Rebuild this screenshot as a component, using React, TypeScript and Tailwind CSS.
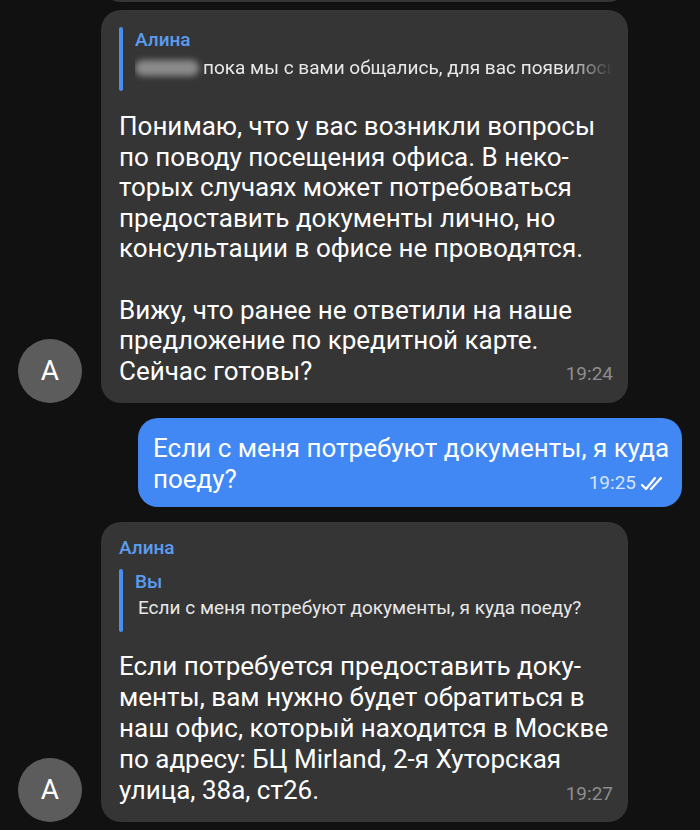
const font = { fontFamily: "Roboto, 'Noto Sans', sans-serif" };

function Avatar() {
  return (
    <div className="w-16 h-16 shrink-0 rounded-full bg-[#5c5c5c] flex items-center justify-center text-white text-[28px] ml-[18px]">
      A
    </div>
  );
}

function Time({ t }: { t: string }) {
  return <span className="text-[19px] text-[#8d8d8d] leading-none pb-[3px]">{t}</span>;
}

function DoubleCheck() {
  return (
    <svg width="26" height="16" viewBox="0 0 26 16" fill="none" stroke="white" strokeWidth="2.2" strokeLinecap="round" strokeLinejoin="round">
      <path d="M2 9l4 4L15 2" />
      <path d="M11 13L21 2" />
    </svg>
  );
}

function Quote({
  name,
  children,
  barH,
}: {
  name: string;
  children: React.ReactNode;
  barH: string;
}) {
  return (
    <div className="flex gap-3">
      <div className={`w-[4px] ${barH} rounded-full bg-[#4a8ef0] shrink-0`} />
      <div className="flex flex-col min-w-0 flex-1">
        <div className="text-[19px] leading-[26px] text-[#5a9cf0] font-medium">{name}</div>
        {children}
      </div>
    </div>
  );
}

export default function App() {
  return (
    <div style={font} className="w-[700px] h-[830px] bg-[#111111] overflow-hidden flex flex-col">
      {/* previous bubble, only its bottom edge is visible */}
      <div className="ml-[101px] w-[527px] h-[40px] -mt-[38px] rounded-[20px] bg-[#353535] shrink-0" />

      {/* incoming message */}
      <div className="flex items-end mt-2 shrink-0">
        <Avatar />
        <div className="ml-[19px] w-[527px] bg-[#353535] rounded-[20px] pl-[18px] pr-[15px] pt-[17px] pb-[17px]">
          <Quote name="Алина" barH="h-[64px]">
            <div className="flex items-center text-[19px] leading-[30px] text-[#e8e8e8] whitespace-nowrap overflow-hidden [mask-image:linear-gradient(to_right,black_90%,transparent)]">
              <span className="inline-block w-[64px] h-[16px] mr-[4px] rounded-full bg-[#8a8a8a] blur-[3px] shrink-0" />
              пока мы с вами общались, для вас появилось
            </div>
          </Quote>
          <div className="mt-[20px] text-[26px] leading-[30.6px] text-white whitespace-nowrap">
            <div>Понимаю, что у вас возникли вопросы</div>
            <div>по поводу посещения офиса. В неко-</div>
            <div>торых случаях может потребоваться</div>
            <div>предоставить документы лично, но</div>
            <div>консультации в офисе не проводятся.</div>
            <div>&nbsp;</div>
            <div>Вижу, что ранее не ответили на наше</div>
            <div>предложение по кредитной карте.</div>
            <div className="flex justify-between items-end">
              <span>Сейчас готовы?</span>
              <Time t="19:24" />
            </div>
          </div>
        </div>
      </div>

      {/* outgoing message */}
      <div className="flex justify-end mt-[15px] mr-[18px] shrink-0">
        <div className="w-[544px] bg-[#4188f4] rounded-[20px] pl-[15px] pr-[16px] pt-[15px] pb-[12px] text-[26px] leading-[31px] text-white whitespace-nowrap">
          <div>Если с меня потребуют документы, я куда</div>
          <div className="flex justify-between items-end">
            <span>поеду?</span>
            <span className="flex items-end gap-[4px] pb-[3px]">
              <span className="text-[19px] leading-none text-[#d6e5fd]">19:25</span>
              <DoubleCheck />
            </span>
          </div>
        </div>
      </div>

      {/* incoming reply */}
      <div className="flex items-end mt-[15px] shrink-0">
        <Avatar />
        <div className="ml-[19px] w-[527px] bg-[#353535] rounded-[20px] pl-[18px] pr-[15px] pt-[13px] pb-[16px]">
          <div className="text-[19px] leading-[26px] text-[#5a9cf0] font-medium">Алина</div>
          <div className="mt-[8px]">
            <Quote name="Вы" barH="h-[63px]">
              <div className="text-[19px] leading-[26px] text-[#e8e8e8] pl-[3px] whitespace-nowrap">
                Если с меня потребуют документы, я куда поеду?
              </div>
            </Quote>
          </div>
          <div className="mt-[19px] text-[26px] leading-[31px] text-white whitespace-nowrap">
            <div>Если потребуется предоставить доку-</div>
            <div>менты, вам нужно будет обратиться в</div>
            <div>наш офис, который находится в Москве</div>
            <div>по адресу: БЦ Mirland, 2-я Хуторская</div>
            <div className="flex justify-between items-end">
              <span>улица, 38а, ст26.</span>
              <Time t="19:27" />
            </div>
          </div>
        </div>
      </div>
    </div>
  );
}
